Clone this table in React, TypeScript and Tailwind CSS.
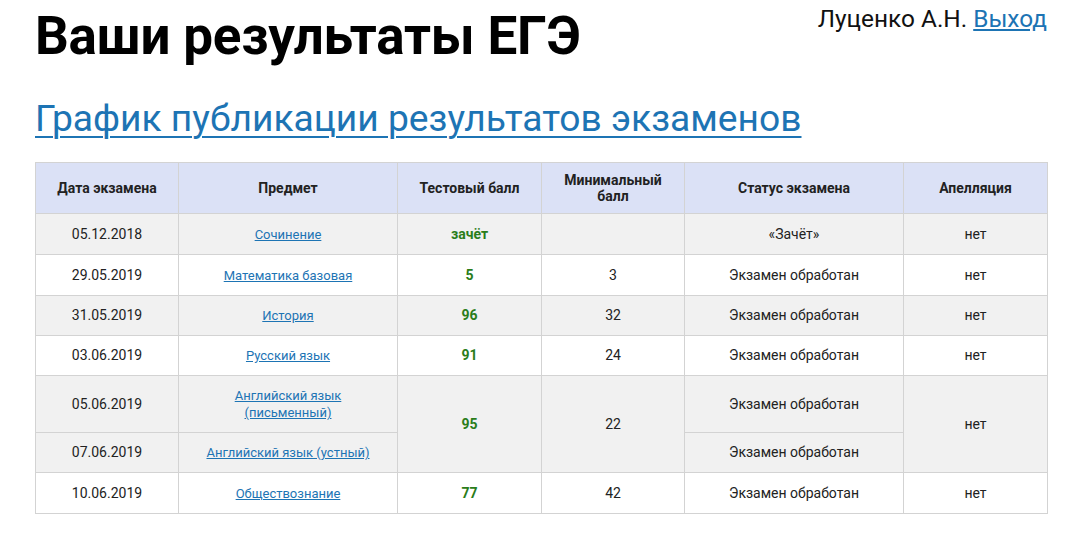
import React from "react";

type Row = {
  date: string;
  subject: string;
  score?: string;
  min?: string;
  status: string;
  appeal?: string;
  scoreSpan?: number;
  gray: boolean;
  h: string;
  skipScore?: boolean;
};

const rows: Row[] = [
  { date: "05.12.2018", subject: "Сочинение", score: "зачёт", min: "", status: "«Зачёт»", appeal: "нет", gray: true, h: "h-[41px]" },
  { date: "29.05.2019", subject: "Математика базовая", score: "5", min: "3", status: "Экзамен обработан", appeal: "нет", gray: false, h: "h-[41px]" },
  { date: "31.05.2019", subject: "История", score: "96", min: "32", status: "Экзамен обработан", appeal: "нет", gray: true, h: "h-[40px]" },
  { date: "03.06.2019", subject: "Русский язык", score: "91", min: "24", status: "Экзамен обработан", appeal: "нет", gray: false, h: "h-[40px]" },
  { date: "05.06.2019", subject: "Английский язык (письменный)", score: "95", min: "22", status: "Экзамен обработан", appeal: "нет", scoreSpan: 2, gray: true, h: "h-[57px]" },
  { date: "07.06.2019", subject: "Английский язык (устный)", status: "Экзамен обработан", gray: true, h: "h-[40px]", skipScore: true },
  { date: "10.06.2019", subject: "Обществознание", score: "77", min: "42", status: "Экзамен обработан", appeal: "нет", gray: false, h: "h-[41px]" },
];

const cell = "border border-[#d3d3d3] text-center align-middle";

export default function App() {
  return (
    <div className="min-h-screen bg-white px-[35px] font-['Roboto',sans-serif] text-black">
      <div className="flex items-start justify-between">
        <h1 className="mt-[2px] text-[53px] font-bold leading-[68px] tracking-[-0.2px]">
          Ваши результаты ЕГЭ
        </h1>
        <div className="mt-[3px] mr-[-2px] text-[24.4px] leading-[32px] text-[#111]">
          Луценко А.Н.{" "}
          <a href="#" className="text-[#1d74b4] underline">
            Выход
          </a>
        </div>
      </div>

      <a
        href="#"
        className="mt-[24px] block text-[37.2px] leading-[48px] text-[#1d74b4] underline decoration-[2px] underline-offset-[5px]"
      >
        График публикации результатов экзаменов
      </a>

      <table className="mt-[20px] w-[1012px] table-fixed border-collapse text-[14px] text-[#222]">
        <colgroup>
          <col className="w-[143px]" />
          <col className="w-[219px]" />
          <col className="w-[144px]" />
          <col className="w-[143px]" />
          <col className="w-[219px]" />
          <col className="w-[144px]" />
        </colgroup>
        <thead>
          <tr className="h-[51px] bg-[#dbe1f6] text-[14px] font-bold leading-[16px] text-[#222]">
            <th className={cell}>Дата экзамена</th>
            <th className={cell}>Предмет</th>
            <th className={cell}>Тестовый балл</th>
            <th className={cell}>
              Минимальный
              <br />
              балл
            </th>
            <th className={cell}>Статус экзамена</th>
            <th className={cell}>Апелляция</th>
          </tr>
        </thead>
        <tbody>
          {rows.map((r) => (
            <tr key={r.date} className={`${r.h} ${r.gray ? "bg-[#f1f1f1]" : "bg-white"}`}>
              <td className={cell}>{r.date}</td>
              <td className={`${cell} px-6 text-[13px] leading-[17px]`}>
                <a href="#" className="text-[#1d74b4] underline">
                  {r.subject}
                </a>
              </td>
              {!r.skipScore && (
                <td
                  rowSpan={r.scoreSpan}
                  className={`${cell} font-bold text-[#2a7d1a]`}
                >
                  {r.score}
                </td>
              )}
              {!r.skipScore && (
                <td rowSpan={r.scoreSpan} className={cell}>
                  {r.min}
                </td>
              )}
              <td className={cell}>{r.status}</td>
              {!r.skipScore && (
                <td rowSpan={r.scoreSpan} className={cell}>
                  {r.appeal}
                </td>
              )}
            </tr>
          ))}
        </tbody>
      </table>
    </div>
  );
}
